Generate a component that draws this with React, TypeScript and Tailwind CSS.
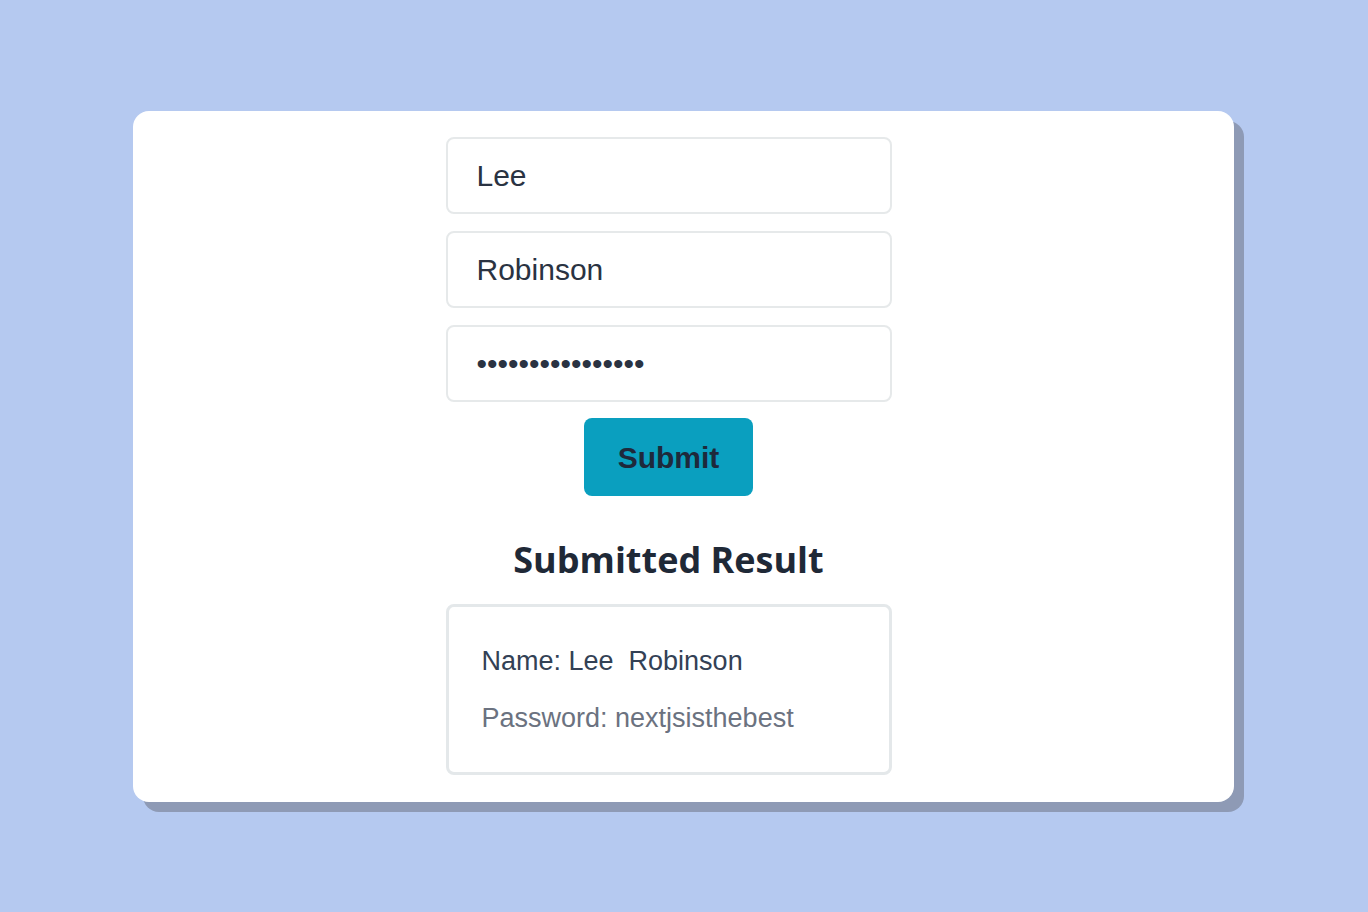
import React from "react";

const inputClass =
  "w-full h-[77px] rounded-lg border-2 border-[#e6e9ea] bg-white px-[29px] text-[30px] text-[#2a3342] outline-none";

const App = () => {
  return (
    <div className="min-h-screen w-full bg-[#b5c9f0] pt-[111px] pl-[133px]" style={{ fontFamily: '"Liberation Sans", Arial, sans-serif' }}>
      <div className="w-[1101px] h-[691px] rounded-2xl bg-white shadow-[10px_10px_0_0_#8e9ab5] flex justify-center pr-[30px]">
        <div className="w-[446px] flex flex-col items-center pt-[26px]">
          <div className="w-full flex flex-col gap-[17px]">
            <input className={inputClass} readOnly defaultValue="Lee" />
            <input className={inputClass} readOnly defaultValue="Robinson" />
            <input type="password" className={inputClass} readOnly defaultValue="nextjsisthebest!" />
          </div>
          <button className="mt-[16px] w-[169px] h-[78px] rounded-lg bg-[#0a9fbf] text-[30px] font-bold text-[#1e293b]">
            Submit
          </button>
          <h2
            className="mt-[44px] text-[36px] leading-[40px] font-bold text-[#1f2937]"
            style={{ fontFamily: '"Open Sans", sans-serif' }}
          >
            Submitted Result
          </h2>
          <div className="mt-[24px] w-full h-[171px] rounded-lg border-[3px] border-[#e4e8ea] px-[33px] pt-[37px]">
            <p className="text-[27px] leading-[34px] text-[#334155] whitespace-pre">Name: Lee  Robinson</p>
            <p className="mt-[23px] text-[27px] leading-[34px] text-[#6b7280]">Password: nextjsisthebest</p>
          </div>
        </div>
      </div>
    </div>
  );
};

export default App;
